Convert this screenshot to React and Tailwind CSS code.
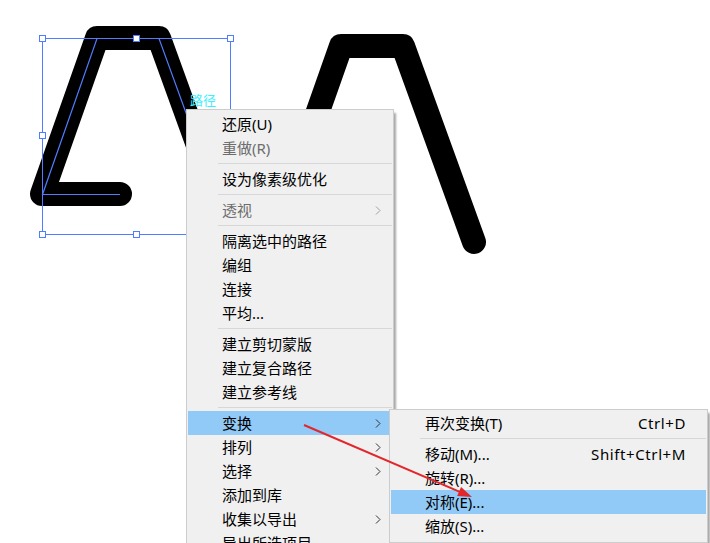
import React from "react";

const FONT = { fontFamily: '"Segoe UI", "Noto Sans", "Noto Sans CJK SC", sans-serif' };

const mainItems = [
  { label: "还原(U)" },
  { label: "重做(R)", disabled: true },
  { sep: true },
  { label: "设为像素级优化" },
  { sep: true },
  { label: "透视", disabled: true, sub: true },
  { sep: true },
  { label: "隔离选中的路径" },
  { label: "编组" },
  { label: "连接" },
  { label: "平均..." },
  { sep: true },
  { label: "建立剪切蒙版" },
  { label: "建立复合路径" },
  { label: "建立参考线" },
  { sep: true },
  { label: "变换", sub: true, active: true },
  { label: "排列", sub: true },
  { label: "选择", sub: true },
  { label: "添加到库" },
  { label: "收集以导出", sub: true },
  { label: "导出所选项目" },
];

const subItems = [
  { label: "再次变换(T)", key: "Ctrl+D" },
  { sep: true },
  { label: "移动(M)...", key: "Shift+Ctrl+M" },
  { label: "旋转(R)..." },
  { label: "对称(E)...", active: true },
  { label: "缩放(S)..." },
];

const Chevron = ({ disabled }) => (
  <svg width="6" height="9" viewBox="0 0 6 9" className="shrink-0">
    <polyline
      points="1,0.5 5,4.5 1,8.5"
      fill="none"
      stroke={disabled ? "#a0a0a0" : "#333"}
      strokeWidth="1"
    />
  </svg>
);

const Menu = ({ items, className, sepIndent }) => (
  <div
    className={`absolute bg-[#f0f0f0] border border-[#cccccc] px-[1px] shadow-[3px_3px_2px_-1px_rgba(0,0,0,0.35)] text-[15px] ${className}`}
    style={FONT}
  >
    {items.map((it, i) =>
      it.sep ? (
        <div key={i} className="h-[7px] flex items-center">
          <div className={`h-px w-full bg-[#d7d7d7] ${sepIndent}`} />
        </div>
      ) : (
        <div
          key={i}
          className={`h-[24px] flex items-center justify-between pl-[34px] ${
            it.active ? "bg-[#91c9f7]" : ""
          } ${it.key ? "pr-[20px]" : "pr-[11px]"} ${
            it.disabled ? "text-[#6d6d6d]" : "text-black"
          }`}
        >
          <span className="leading-none whitespace-nowrap">{it.label}</span>
          {it.key && (
            <span className="leading-none whitespace-nowrap tracking-[0.6px]">{it.key}</span>
          )}
          {it.sub && <Chevron disabled={it.disabled} />}
        </div>
      )
    )}
  </div>
);

export default function App() {
  const blue = "#4f7dff";
  const handles = [
    [42, 38], [136, 38], [230, 38],
    [42, 135], [230, 135],
    [42, 234], [136, 234], [230, 234],
  ];

  return (
    <div className="relative w-[710px] h-[543px] bg-white overflow-hidden">
      {/* artboard */}
      <svg className="absolute inset-0" width="710" height="543">
        <path
          d="M120 194 L42 194 L97 38 L159 38 L230 234"
          fill="none"
          stroke="#000"
          strokeWidth="24"
          strokeLinejoin="round"
          strokeLinecap="round"
        />
        <path
          d="M364 202 L286 202 L341 46 L403 46 L474 242"
          fill="none"
          stroke="#000"
          strokeWidth="24"
          strokeLinejoin="round"
          strokeLinecap="round"
        />
        <path
          d="M120 194.5 L42.5 194.5 L97 38.5 L159 38.5 L230 234"
          fill="none"
          stroke={blue}
          strokeWidth="1.2"
        />
        <rect
          x="42.5"
          y="38.5"
          width="188"
          height="196"
          fill="none"
          stroke={blue}
          strokeWidth="1"
          shapeRendering="crispEdges"
        />
        {handles.map(([x, y], i) => (
          <rect
            key={i}
            x={x - 2.5}
            y={y - 2.5}
            width="6"
            height="6"
            fill="#fff"
            stroke={blue}
            strokeWidth="1"
            shapeRendering="crispEdges"
          />
        ))}
      </svg>

      <span
        className="absolute left-[190px] top-[93px] text-[13px] leading-none text-[#3cf0ff]"
        style={{ fontFamily: '"Noto Sans CJK SC", sans-serif' }}
      >
        路径
      </span>

      {/* context menu */}
      <Menu
        items={mainItems}
        className="left-[186px] top-[109px] w-[208px] pt-[2px]"
        sepIndent="ml-[30px]"
      />

      {/* transform submenu */}
      <Menu
        items={subItems}
        className="left-[389px] top-[409px] w-[319px] pt-[1px] pb-[4px]"
        sepIndent="ml-[29px]"
      />

      {/* annotation arrow */}
      <svg className="absolute inset-0 pointer-events-none" width="710" height="543">
        <line x1="304" y1="425" x2="461" y2="492.3" stroke="#e3262b" strokeWidth="2" />
        <polygon points="472,497 457.1,496.1 461.1,486.9" fill="#e3262b" />
      </svg>
    </div>
  );
}
